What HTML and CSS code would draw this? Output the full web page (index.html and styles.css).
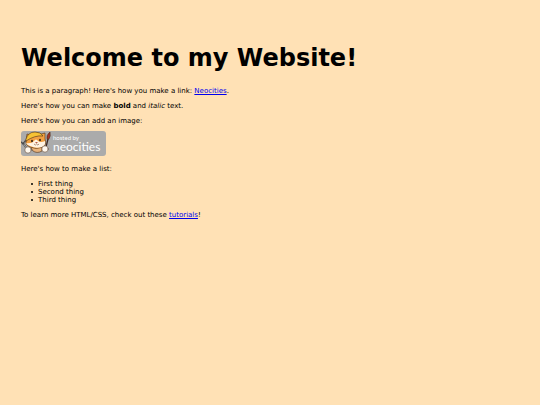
FILE: index.html
```html
<!DOCTYPE html>
<html lang="en">
<head>
  <meta charset="UTF-8">
  <meta name="viewport" content="width=device-width, initial-scale=1">
  <title>My Website</title>
  <link rel="stylesheet" href="styles.css">
</head>
<body>
  <h1>Welcome to my Website!</h1>

  <p>This is a paragraph! Here's how you make a link: <a href="#">Neocities</a>.</p>

  <p>Here's how you can make <strong>bold</strong> and <em>italic</em> text.</p>

  <p>Here's how you can add an image:</p>
  <svg class="badge" viewBox="0 0 85 25">
    <rect width="85" height="25" rx="3" fill="#ababab"/>
    <!-- cat -->
    <g stroke="#4a2f1a" stroke-width=".6" stroke-linejoin="round" stroke-linecap="round">
      <path d="M10 16 L21 16 L21 20 Q16 23 12 20 Z" fill="#e8b27a"/>
      <path d="M5 10 L6 3 L10 4 Q15 0 20 3 L24 2 L24 8 Q26 14 22 16 Q15 19 9 16 Q4 14 5 10 Z" fill="#f2a040"/>
      <path d="M5 12 Q10 13 13 10 Q15 7 17 10 Q20 12 24 10 Q25 14 21 16 Q15 18 9 15 Q6 14 5 12 Z" fill="#fff3e2" stroke="none"/>
      <path d="M5 8 Q7 1 14 1 Q20 1 22 5 Q14 4 5 10 Z" fill="#f6c233"/>
      <!-- wrench -->
      <path d="M2 12 L8 21" stroke="#4c4c4c" stroke-width="1.8"/>
      <path d="M2 12 L8 21" stroke="#c9c9c9" stroke-width=".7"/>
      <path d="M0 11 L2 13 L4 10" fill="none" stroke="#4c4c4c" stroke-width="1.2"/>
      <!-- brush -->
      <path d="M27 8 L24 20" stroke="#3c2a26" stroke-width="1.3"/>
      <path d="M26 8 Q25 4 29 1 Q30 5 28 8 Z" fill="#a3352a"/>
      <circle cx="7" cy="19" r="3.2" fill="#fff8ee" stroke-width=".5"/>
      <circle cx="24" cy="18" r="3.2" fill="#fff8ee" stroke-width=".5"/>
    </g>
    <ellipse cx="11" cy="10" rx=".8" ry="1.2" fill="#20140d"/>
    <ellipse cx="19" cy="9" rx=".8" ry="1.2" fill="#20140d"/>
    <path d="M14 11 L17 11 L15.5 12.5 Z" fill="#b85c44"/>
    <path d="M13 13 Q14.5 15 15.5 13 Q17 15 18 13" fill="none" stroke="#5a3220" stroke-width=".5"/>
    <text class="badge-small" x="32" y="9">hosted by</text>
    <text class="badge-name" x="32" y="20">neocities</text>
  </svg>

  <p>Here's how to make a list:</p>

  <ul>
    <li>First thing</li>
    <li>Second thing</li>
    <li>Third thing</li>
  </ul>

  <p>To learn more HTML/CSS, check out these <a href="#">tutorials</a>!</p>
</body>
</html>
```

FILE: styles.css
```css
body {
  background-color: #ffe1b5;
  color: black;
  font-family: Verdana, "DejaVu Sans", sans-serif;
  font-size: 7px;
  line-height: 8px;
  margin: 0;
  padding: 21px;
}
h1 {
  font-size: 24px;
  line-height: 28px;
  margin: 23px 0 15px;
}
p {
  margin: 7px 0;
}
a {
  color: #0000ee;
}
.badge {
  display: block;
  width: 85px;
  height: 25px;
  margin: -1px 0 9px;
}
.badge text {
  fill: white;
  font-family: Lato, sans-serif;
}
.badge-small {
  font-size: 6px;
}
.badge-name {
  font-size: 12px;
}
ul {
  list-style: none;
  margin: 7px 0;
  padding-left: 10px;
}
li {
  display: flex;
  align-items: center;
  gap: 5px;
}
li::before {
  content: "";
  width: 2px;
  height: 2px;
  border-radius: 1px;
  background-color: black;
}
```
